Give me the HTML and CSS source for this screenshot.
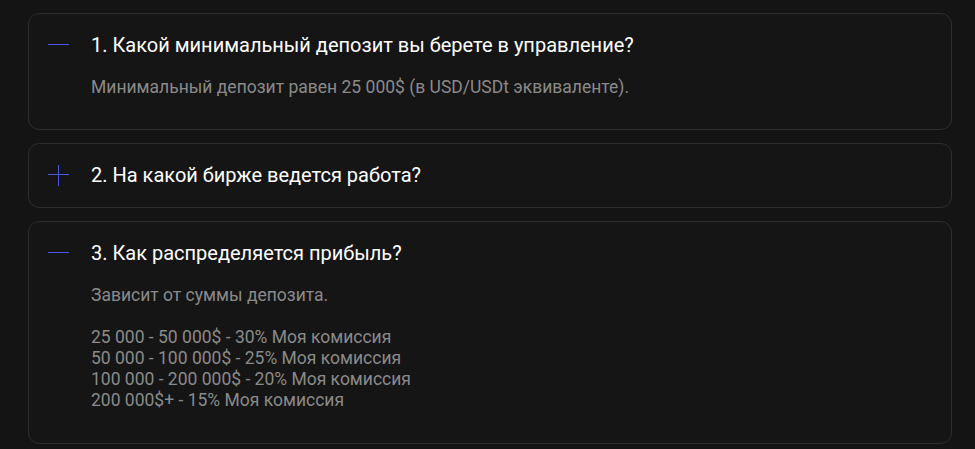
FILE: index.html
```html
<!DOCTYPE html>
<html lang="ru">
<head>
<meta charset="utf-8">
<link rel="stylesheet" href="styles.css">
</head>
<body>
<div class="faq">
  <div class="item open">
    <div class="q"><span class="icon minus"></span><span class="qt">1. Какой минимальный депозит вы берете в управление?</span></div>
    <div class="a">Минимальный депозит равен 25 000$ (в USD/USDt эквиваленте).</div>
  </div>
  <div class="item closed">
    <div class="q"><span class="icon plus"></span><span class="qt">2. На какой бирже ведется работа?</span></div>
  </div>
  <div class="item open">
    <div class="q"><span class="icon minus"></span><span class="qt">3. Как распределяется прибыль?</span></div>
    <div class="a">Зависит от суммы депозита.<br><br>25 000 - 50 000$ - 30% Моя комиссия<br>50 000 - 100 000$ - 25% Моя комиссия<br>100 000 - 200 000$ - 20% Моя комиссия<br>200 000$+ - 15% Моя комиссия</div>
  </div>
</div>
</body>
</html>
```
FILE: styles.css
```css
html, body {
  margin: 0;
  background: #141414;
  font-family: Roboto, "Noto Sans", sans-serif;
}
.faq {
  display: flex;
  flex-direction: column;
  gap: 13px;
  padding: 13px 23px 0 28px;
}
.item {
  border: 1px solid #2e2e2e;
  border-radius: 11px;
  background: #151515;
  padding: 20px 19px;
}
.item.closed {
  padding-bottom: 21px;
}
.item.open {
  padding-bottom: 31px;
}
.item.open:last-child {
  padding-bottom: 32px;
}
.q {
  display: flex;
  align-items: center;
  gap: 22px;
  height: 22px;
}
.qt {
  color: #ffffff;
  font-size: 20px;
  line-height: 22px;
}
.icon {
  position: relative;
  width: 21px;
  height: 22px;
  flex: none;
}
.icon::before {
  content: "";
  position: absolute;
  left: 0;
  right: 0;
  top: 10px;
  height: 1px;
  background: #4a5ae6;
}
.plus::after {
  content: "";
  position: absolute;
  top: 1px;
  bottom: 0;
  left: 10px;
  width: 1px;
  background: #4a5ae6;
}
.a {
  margin-top: 21px;
  padding-left: 43px;
  color: #8a8a8a;
  font-size: 17.5px;
  line-height: 21px;
}
```
